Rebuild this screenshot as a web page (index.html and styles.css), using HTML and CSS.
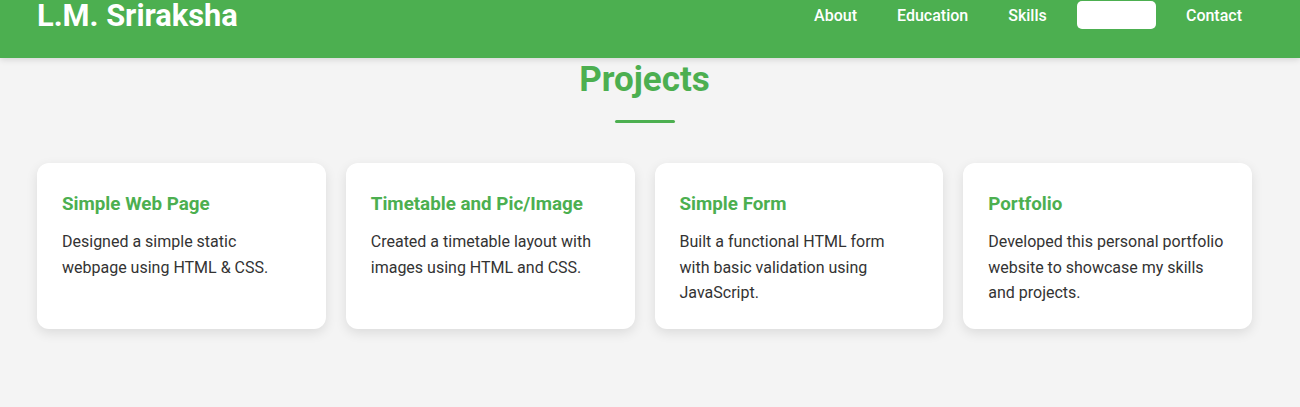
FILE: index.html
```html
<!DOCTYPE html>
<html lang="en">
<head>
<meta charset="utf-8">
<title>L.M. Sriraksha</title>
<link rel="stylesheet" href="styles.css">
</head>
<body>
<header class="site-header">
  <h1 class="brand">L.M. Sriraksha</h1>
  <nav class="nav">
    <a class="nav-link" href="#about">About</a>
    <a class="nav-link" href="#education">Education</a>
    <a class="nav-link" href="#skills">Skills</a>
    <a class="nav-link active" href="#projects">Projects</a>
    <a class="nav-link" href="#contact">Contact</a>
  </nav>
</header>
<main class="main">
  <section class="projects" id="projects">
    <h2 class="section-title">Projects</h2>
    <div class="cards">
      <div class="card">
        <h3 class="card-title">Simple Web Page</h3>
        <p class="card-text">Designed a simple static webpage using HTML &amp; CSS.</p>
      </div>
      <div class="card">
        <h3 class="card-title">Timetable and Pic/Image</h3>
        <p class="card-text">Created a timetable layout with images using HTML and CSS.</p>
      </div>
      <div class="card">
        <h3 class="card-title">Simple Form</h3>
        <p class="card-text">Built a functional HTML form with basic validation using JavaScript.</p>
      </div>
      <div class="card">
        <h3 class="card-title">Portfolio</h3>
        <p class="card-text">Developed this personal portfolio website to showcase my skills and projects.</p>
      </div>
    </div>
  </section>
</main>
</body>
</html>
```
FILE: styles.css
```css
* { box-sizing: border-box; }
html, body { margin: 0; padding: 0; }
body {
  background: #f4f4f4;
  font-family: Roboto, "Liberation Sans", Arial, sans-serif;
  color: #333;
  height: 407px;
  overflow: hidden;
}
.site-header {
  background: #4caf50;
  height: 58px;
  display: flex;
  justify-content: space-between;
  align-items: flex-start;
  padding: 0 48px 0 37px;
  box-shadow: 0 2px 6px rgba(0,0,0,0.12);
  position: relative;
  z-index: 1;
}
.brand {
  margin: 1px 0 0;
  color: #fff;
  font-size: 30.8px;
  font-weight: 700;
  line-height: 30.8px;
}
.nav {
  display: flex;
  gap: 20px;
  margin-top: 1px;
}
.nav-link {
  color: #fff;
  text-decoration: none;
  font-size: 16px;
  font-weight: 500;
  padding: 6px 10px 4px;
  border-radius: 5px;
  line-height: 18px;
}
.nav-link.active {
  background: #fff;
  color: #fff;
}
.main {
  padding: 0 48px 0 37px;
}
.projects {
  text-align: center;
}
.section-title {
  margin: 0;
  color: #4caf50;
  font-size: 35px;
  font-weight: 700;
  line-height: 41px;
  padding-top: 1px;
}
.section-title::after {
  content: "";
  display: block;
  width: 60px;
  height: 3px;
  background: #4caf50;
  border-radius: 2px;
  margin: 20px auto 0;
}
.cards {
  display: grid;
  grid-template-columns: repeat(4, 1fr);
  gap: 20px;
  margin-top: 40px;
  text-align: left;
}
.card {
  background: #fff;
  border-radius: 12px;
  padding: 26px 25px 23px;
  box-shadow: 0 4px 12px rgba(0,0,0,0.1);
}
.card-title {
  margin: 0 0 10px;
  color: #4caf50;
  font-size: 18.8px;
  font-weight: 700;
  line-height: 30px;
}
.card-text {
  margin: 0;
  font-size: 16px;
  line-height: 25.6px;
  color: #333;
}
```
